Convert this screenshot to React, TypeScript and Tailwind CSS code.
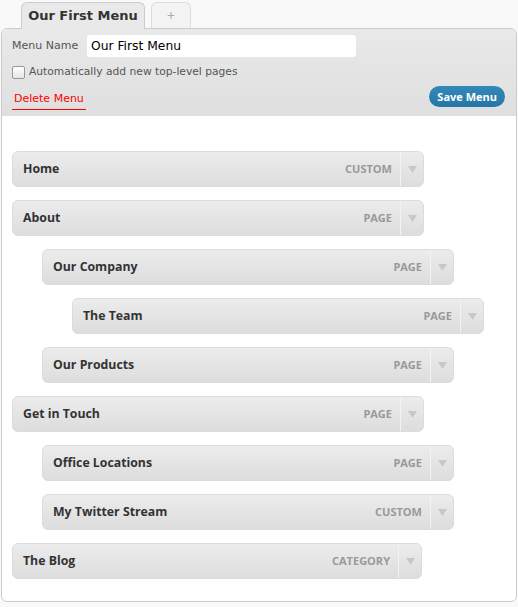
const ITEMS = [
  { title: "Home", type: "Custom", depth: 0 },
  { title: "About", type: "Page", depth: 0 },
  { title: "Our Company", type: "Page", depth: 1 },
  { title: "The Team", type: "Page", depth: 2 },
  { title: "Our Products", type: "Page", depth: 1 },
  { title: "Get in Touch", type: "Page", depth: 0 },
  { title: "Office Locations", type: "Page", depth: 1 },
  { title: "My Twitter Stream", type: "Custom", depth: 1 },
  { title: "The Blog", type: "Category", depth: 0, narrow: true },
];

const indent = ["ml-0", "ml-[30px]", "ml-[60px]"];

function MenuItem({ title, type, depth, narrow }: { title: string; type: string; depth: number; narrow?: boolean }) {
  return (
    <div
      className={`${indent[depth]} ${narrow ? "w-[410px]" : "w-[412px]"} h-[36px] flex items-stretch rounded-[6px] border border-[#dcdcdc] bg-gradient-to-b from-[#ececec] to-[#dddddd]`}
    >
      <span className="flex-1 flex items-center pl-[10px] text-[12.3px] font-bold text-[#333]">{title}</span>
      <span className="flex items-center pr-[8px] text-[11px] font-bold uppercase text-[#999]">{type}</span>
      <span className="w-[23px] flex items-center justify-center border-l border-[#f3f3f3]">
        <svg width="9" height="7" viewBox="0 0 9 7">
          <path d="M0 0 H9 L4.5 7 Z" fill="#c8c8c8" />
        </svg>
      </span>
    </div>
  );
}

export default function App() {
  return (
    <div className="w-[518px] h-[607px] bg-[#f9f9f9] pt-px pl-px font-['Open_Sans',sans-serif]">
      <div className="flex items-end gap-[6px] ml-[20px] h-[27px]">
        <div className="relative z-10 -mb-px w-[124px] h-[27px] flex items-center justify-center rounded-t-[6px] border border-b-0 border-[#cccccc] bg-[#e9e9e9] text-[13px] font-bold text-[#333] font-['DejaVu_Sans',sans-serif]">
          Our First Menu
        </div>
        <div className="w-[40px] h-[26px] flex items-center justify-center rounded-t-[6px] border border-b-0 border-[#dddddd] bg-[#f3f3f3] text-[14px] text-[#aaa]">
          +
        </div>
      </div>
      <div className="w-[516px] h-[574px] rounded-[6px] border border-[#cccccc] bg-white overflow-hidden">
        <div className="h-[87px] bg-gradient-to-b from-[#e9e9e9] to-[#dfdfdf] pl-[10px] pr-[11px] pt-[6px] font-['DejaVu_Sans',sans-serif]">
          <div className="flex items-center h-[22px]">
            <span className="w-[75px] text-[11px] text-[#555]">Menu Name</span>
            <div className="w-[269px] h-[22px] bg-white rounded-[3px] flex items-center pl-[4px] text-[12.3px] text-black">
              Our First Menu
            </div>
          </div>
          <div className="flex items-center mt-[9px] h-[13px]">
            <span className="w-[13px] h-[13px] rounded-[2px] border border-[#999] bg-gradient-to-b from-white to-[#e6e6e6]" />
            <span className="ml-[4px] text-[10.7px] text-[#555]">Automatically add new top-level pages</span>
          </div>
          <div className="flex items-center justify-between mt-[5px]">
            <span className="mt-[7px] text-[11px] text-[#f00] border-b border-[#f00] pb-[1px] px-[2px]">Delete Menu</span>
            <span className="h-[21px] px-[8px] flex items-center rounded-full bg-gradient-to-b from-[#3389bb] to-[#2576a4] text-[11px] font-bold text-white font-['Open_Sans',sans-serif]">
              Save Menu
            </span>
          </div>
        </div>
        <div className="flex flex-col gap-[13px] pt-[35px] pl-[10px]">
          {ITEMS.map((item) => (
            <MenuItem key={item.title} {...item} />
          ))}
        </div>
      </div>
    </div>
  );
}
